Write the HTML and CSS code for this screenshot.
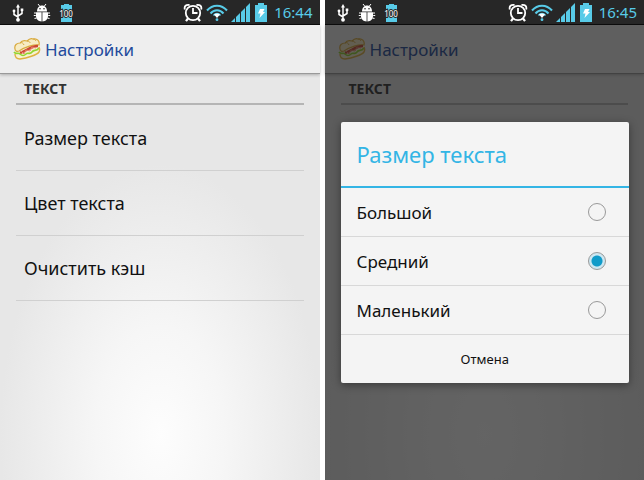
FILE: index.html
```html
<!DOCTYPE html>
<html lang="ru">
<head>
    <meta charset="UTF-8">
    <meta name="viewport" content="width=device-width, initial-scale=1.0">
    <title>Настройки</title>
    <link rel="stylesheet" href="styles.css">
</head>
<body>

    <!-- shared icons -->
    <svg class="sprite" aria-hidden="true">
        <symbol id="usb" viewBox="0 0 12 18">
            <path d="M6 3v12M2 7v3.500l4 2.500M10 6v3.500l-4 2.500" fill="none" stroke="#fff" stroke-width="1.500"/>
            <path d="M6 0l2 3.500H4z" fill="#fff"/>
            <circle cx="2" cy="7" r="1.400" fill="#fff"/>
            <path d="M8.700 4.500h2.600v2.600H8.700z" fill="#fff"/>
            <circle cx="6" cy="15.800" r="1.900" fill="#fff"/>
        </symbol>
        <symbol id="android" viewBox="0 0 18 18">
            <path d="M5 0l2 2.500M13 0l-2 2.500" stroke="#fff" stroke-width="1"/>
            <path d="M4 7.500C4 4 6 1.500 9 1.500s5 2.500 5 6z" fill="#fff"/>
            <path d="M3 8.300h5.600v9.200C5 17.300 3 15 3 12zM9.400 8.300H15V12c0 3-2 5.300-5.600 5.500z" fill="#fff"/>
            <path d="M1 9h2M15 9h2M.8 11.500h2M15.200 11.500h2M1.500 14.500l2-.5M16.500 14.500l-2-.5" fill="none" stroke="#fff" stroke-width="1.200"/>
            <circle cx="7" cy="4.800" r=".8" fill="#272727"/>
            <circle cx="11" cy="4.800" r=".8" fill="#272727"/>
        </symbol>
        <symbol id="alarm" viewBox="0 0 20 18">
            <circle cx="10" cy="9" r="7.200" fill="none" stroke="#fff" stroke-width="1.800"/>
            <path d="M1.800 5.500C1 2 3 .5 6.500 1M18.200 5.500C19 2 17 .5 13.500 1" fill="none" stroke="#fff" stroke-width="1.800"/>
            <path d="M10 4v5h4.500" fill="none" stroke="#fff" stroke-width="1.800"/>
            <path d="M5 14.500L3 17.200M15 14.500l2 2.700" stroke="#fff" stroke-width="2.200"/>
        </symbol>
        <symbol id="wifi" viewBox="0 0 22 18">
            <path d="M1 6.500C6.500 0 15.500 0 21 6.500M4.500 9.500c3.500-4.200 9.500-4.200 13 0" fill="none" stroke="#58cbe8" stroke-width="2"/>
            <path d="M7.500 11.500c2-2.600 5-2.600 7 0" fill="none" stroke="#58cbe8" stroke-width="1.600"/>
            <path d="M8 10.500c1.500-1.500 4.500-1.500 6 0l-3 3.500z" fill="#fff"/>
            <circle cx="11" cy="15.700" r="1.400" fill="#58cbe8"/>
        </symbol>
        <symbol id="signal" viewBox="0 0 20 19">
            <path d="M0 19l4-4v4zM5 14l4-4v9H5zM10 9l4-4v14h-4zM15 4l4-4v19h-4z" fill="#58cbe8"/>
        </symbol>
        <symbol id="charging" viewBox="0 0 14 19">
            <path d="M4 0h6v2h3v17H1V2h3z" fill="#58cbe8"/>
            <path d="M6 6h4.500L9 9h2l-5.500 6 1-4.500H4z" fill="#fff"/>
        </symbol>
        <symbol id="hotdog" viewBox="0 0 28 22">
            <path d="M3 16C1 12 3 8 7 5L20 1c4-1 7 1 7 4l-1 8c-1 4-15 8-20 8-3 0-4-2-3-5z" fill="#f8f1d2"/>
            <path d="M2 11C1 7 4 5 7 5c2-3 4-3 7-2 2-2 4-3 6-2 4-1 7 2 6 6-5-1-14 2-20 6-2 1-4 0-4-2z" fill="#f7ecc4" stroke="#d8a93d" stroke-width="1.200"/>
            <path d="M7 5c2-1 3 0 4 2M14 3c2 0 3 1 3 2M20 1c2 0 2 1 3 2" fill="none" stroke="#d8a93d"/>
            <path d="M7 15c6-2 11-7 18-7" fill="none" stroke="#cc4932" stroke-width="2.500"/>
            <path d="M8 13l3 3 2-4 4 1 2-4 4 1" fill="none" stroke="#e98673" stroke-width="1"/>
            <path d="M1 14c2 3 4 0 6 2s4 2 6 0 4 1 6-2 4 0 7-4" fill="none" stroke="#91d52f" stroke-width="1.600"/>
            <path d="M2 16c0 3 2 5 5 5 7-1 17-4 19-7 1-2 1-3 0-5" fill="none" stroke="#dfb13f" stroke-width="1.400"/>
        </symbol>
    </svg>

    <div class="screens">
        <section class="screen">
            <div class="status">
                <svg width="12" height="18"><use href="#usb"/></svg>
                <svg width="18" height="18"><use href="#android"/></svg>
                <svg class="level" width="12" height="18" viewBox="0 0 12 18">
                    <path d="M4 0h5v1h3v17H1V1h3z" fill="#58cbe8"/>
                    <text x="6" y="13" text-anchor="middle">100</text>
                </svg>
                <div class="status-right">
                    <svg width="20" height="18"><use href="#alarm"/></svg>
                    <svg width="22" height="18"><use href="#wifi"/></svg>
                    <svg width="20" height="19"><use href="#signal"/></svg>
                    <svg width="14" height="19"><use href="#charging"/></svg>
                    <time>16:44</time>
                </div>
            </div>
            <main class="content">
                <header class="bar">
                    <svg width="28" height="22"><use href="#hotdog"/></svg>
                    <h1>Настройки</h1>
                </header>
                <div class="prefs">
                    <h2>ТЕКСТ</h2>
                    <button type="button">Размер текста</button>
                    <button type="button">Цвет текста</button>
                    <button type="button">Очистить кэш</button>
                </div>
            </main>
        </section>

        <section class="screen">
            <div class="status">
                <svg width="12" height="18"><use href="#usb"/></svg>
                <svg width="18" height="18"><use href="#android"/></svg>
                <svg class="level" width="12" height="18" viewBox="0 0 12 18">
                    <path d="M4 0h5v1h3v17H1V1h3z" fill="#58cbe8"/>
                    <text x="6" y="13" text-anchor="middle">100</text>
                </svg>
                <div class="status-right">
                    <svg width="20" height="18"><use href="#alarm"/></svg>
                    <svg width="22" height="18"><use href="#wifi"/></svg>
                    <svg width="20" height="19"><use href="#signal"/></svg>
                    <svg width="14" height="19"><use href="#charging"/></svg>
                    <time>16:45</time>
                </div>
            </div>
            <div class="content">
                <header class="bar">
                    <svg width="28" height="22"><use href="#hotdog"/></svg>
                    <h1>Настройки</h1>
                </header>
                <div class="prefs">
                    <h2>ТЕКСТ</h2>
                </div>
                <div class="overlay">
                    <form class="dialog" role="dialog" aria-labelledby="dialog-title">
                        <h2 id="dialog-title">Размер текста</h2>
                        <label>Большой <input type="radio" name="size" value="large"></label>
                        <label>Средний <input type="radio" name="size" value="medium" checked></label>
                        <label>Маленький <input type="radio" name="size" value="small"></label>
                        <button type="button">Отмена</button>
                    </form>
                </div>
            </div>
        </section>
    </div>

</body>
</html>
```
FILE: styles.css
```css
* {
    box-sizing: border-box;
}
body {
    margin: 0;
    background: white;
    color: #111;
    font-family: "Noto Sans", "Open Sans", sans-serif;
}
h1, h2 {
    margin: 0;
    font-weight: normal;
}
button {
    border: none;
    background: none;
    color: inherit;
    font-family: inherit;
    cursor: pointer;
}
.sprite {
    display: none;
}
.screens {
    display: grid;
    grid-template-columns: 1fr 1fr;
    gap: 5px;
    min-height: 100vh;
}
.screen {
    display: flex;
    flex-direction: column;
}

/* status bar */
.status {
    display: flex;
    align-items: center;
    gap: 9px;
    height: 25px;
    padding: 1px 7px 0 12px;
    background: #272727;
    border-bottom: 1px solid #0c0c0c;
}
.status svg {
    display: block;
    overflow: visible;
}
.status-right {
    display: flex;
    align-items: center;
    gap: 3px;
    margin-left: auto;
}
.status time {
    margin-left: 3px;
    color: #58cbe8;
    font-size: 15px;
    line-height: 23px;
}
.level text {
    fill: white;
    stroke: #272727;
    stroke-width: 2px;
    paint-order: stroke;
    font-size: 8px;
}

/* settings page */
.content {
    position: relative;
    flex: 1;
    background: radial-gradient(ellipse 160px 270px at 50% 90%, #fdfdfd, #f6f6f6 40%, #e7e7e7);
}
.bar {
    display: flex;
    align-items: center;
    gap: 4px;
    height: 49px;
    padding-left: 13px;
    background: #eee;
    border-bottom: 1px solid #999;
    box-shadow: 0 1px 3px rgba(0, 0, 0, 0.25);
}
.bar h1 {
    color: #234a9c;
    font-size: 17px;
}
.prefs {
    padding: 0 16px;
}
.prefs h2 {
    height: 31px;
    padding: 0 8px;
    border-bottom: 2px solid #b5b5b5;
    color: #333;
    font-size: 14px;
    font-weight: bold;
    line-height: 30px;
}
.prefs button {
    display: block;
    width: 100%;
    height: 65px;
    padding: 0 8px;
    border-bottom: 1px solid #d0d0d0;
    font-size: 18px;
    text-align: left;
}
.prefs h2 + button {
    height: 66px;
}

/* dialog */
.overlay {
    position: absolute;
    inset: 0;
    display: flex;
    align-items: center;
    padding: 0 15px 0 16px;
    background: rgba(24, 24, 24, 0.67);
}
.dialog {
    flex: 1;
    background: #f4f4f4;
    border-radius: 2px;
    box-shadow: 0 2px 8px rgba(0, 0, 0, 0.4);
}
.dialog h2 {
    padding: 0 16px;
    border-bottom: 2px solid #33b5e5;
    color: #33b5e5;
    font-size: 22px;
    line-height: 64px;
}
.dialog label {
    display: flex;
    align-items: center;
    justify-content: space-between;
    height: 49px;
    padding: 0 23px 0 16px;
    border-bottom: 1px solid #d8d8d8;
    font-size: 17px;
}
.dialog input {
    appearance: none;
    width: 18px;
    height: 18px;
    margin: 0;
    border: 1px solid #999;
    border-radius: 50%;
}
.dialog input:checked {
    background: radial-gradient(circle, #109bc9 5px, #cde7f1 6px);
}
.dialog button {
    display: block;
    width: 100%;
    height: 48px;
    font-size: 13px;
}
```
